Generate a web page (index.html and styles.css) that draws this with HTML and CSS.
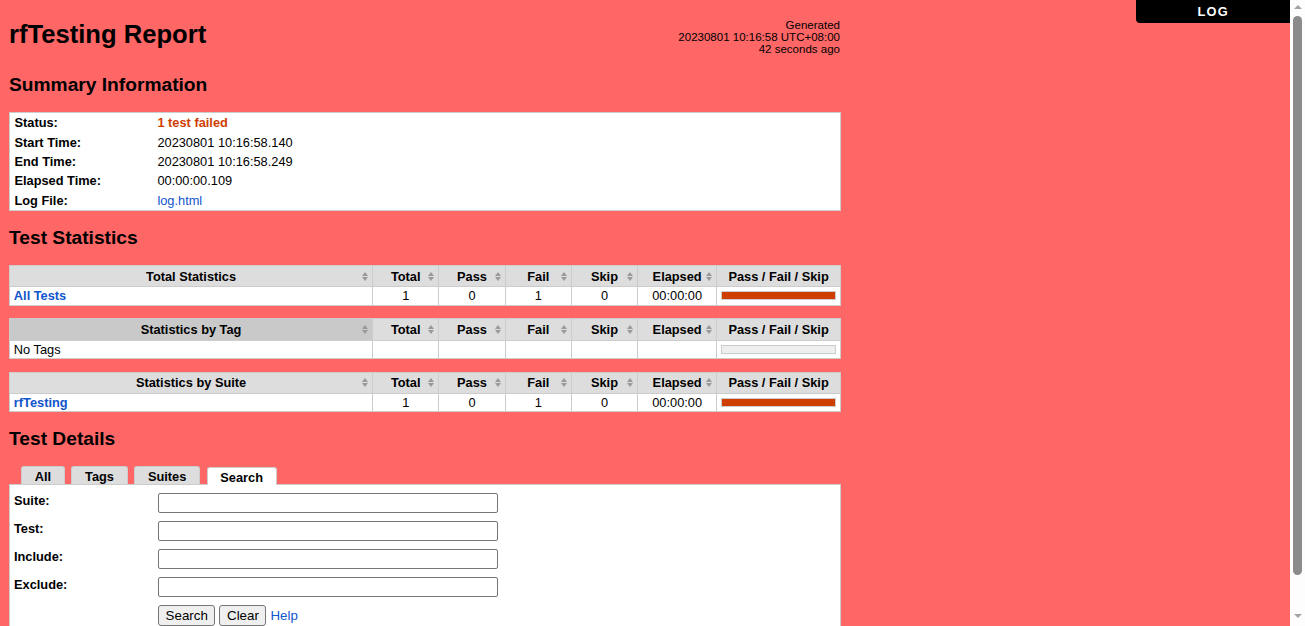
FILE: index.html
```html
<!DOCTYPE html>
<html lang="en">
<head>
<meta charset="utf-8">
<title>rfTesting Report</title>
<link rel="stylesheet" href="styles.css">
</head>
<body>
<div class="top-right">
  <a href="#" class="log-link">LOG</a>
</div>

<div class="fake-scrollbar" aria-hidden="true">
  <span class="sb-arrow sb-up"></span>
  <span class="sb-thumb"></span>
  <span class="sb-arrow sb-down"></span>
</div>

<div class="header">
  <h1>rfTesting Report</h1>
  <div class="generated">Generated<br>20230801 10:16:58 UTC+08:00<br>42 seconds ago</div>
</div>

<h2>Summary Information</h2>
<table class="details">
  <tr><th>Status:</th><td><span class="fail-text">1 test failed</span></td></tr>
  <tr><th>Start Time:</th><td>20230801 10:16:58.140</td></tr>
  <tr><th>End Time:</th><td>20230801 10:16:58.249</td></tr>
  <tr><th>Elapsed Time:</th><td>00:00:00.109</td></tr>
  <tr><th>Log File:</th><td><a href="#">log.html</a></td></tr>
</table>

<h2>Test Statistics</h2>
<table class="statistics">
  <thead>
    <tr>
      <th class="sortable">Total Statistics</th>
      <th class="col-stat sortable">Total</th>
      <th class="col-stat sortable">Pass</th>
      <th class="col-stat sortable">Fail</th>
      <th class="col-stat sortable">Skip</th>
      <th class="col-elapsed sortable">Elapsed</th>
      <th class="col-graph">Pass / Fail / Skip</th>
    </tr>
  </thead>
  <tbody>
    <tr>
      <td class="stat-name"><a href="#">All Tests</a></td>
      <td class="num">1</td>
      <td class="num">0</td>
      <td class="num">1</td>
      <td class="num">0</td>
      <td class="num">00:00:00</td>
      <td><div class="graph"><div class="fail-bar" style="width:100%"></div></div></td>
    </tr>
  </tbody>
</table>

<table class="statistics">
  <thead>
    <tr>
      <th class="sortable sorted">Statistics by Tag</th>
      <th class="col-stat sortable">Total</th>
      <th class="col-stat sortable">Pass</th>
      <th class="col-stat sortable">Fail</th>
      <th class="col-stat sortable">Skip</th>
      <th class="col-elapsed sortable">Elapsed</th>
      <th class="col-graph">Pass / Fail / Skip</th>
    </tr>
  </thead>
  <tbody>
    <tr>
      <td class="plain-name">No Tags</td>
      <td class="num"></td>
      <td class="num"></td>
      <td class="num"></td>
      <td class="num"></td>
      <td class="num"></td>
      <td><div class="graph empty"></div></td>
    </tr>
  </tbody>
</table>

<table class="statistics">
  <thead>
    <tr>
      <th class="sortable">Statistics by Suite</th>
      <th class="col-stat sortable">Total</th>
      <th class="col-stat sortable">Pass</th>
      <th class="col-stat sortable">Fail</th>
      <th class="col-stat sortable">Skip</th>
      <th class="col-elapsed sortable">Elapsed</th>
      <th class="col-graph">Pass / Fail / Skip</th>
    </tr>
  </thead>
  <tbody>
    <tr>
      <td class="stat-name"><a href="#">rfTesting</a></td>
      <td class="num">1</td>
      <td class="num">0</td>
      <td class="num">1</td>
      <td class="num">0</td>
      <td class="num">00:00:00</td>
      <td><div class="graph"><div class="fail-bar" style="width:100%"></div></div></td>
    </tr>
  </tbody>
</table>

<h2>Test Details</h2>
<div class="detail-tabs">
  <div class="tab">All</div>
  <div class="tab">Tags</div>
  <div class="tab">Suites</div>
  <div class="tab selected">Search</div>
</div>
<div class="detail-panel">
  <form class="search-form">
    <div class="search-row">
      <label class="search-label" for="s-suite">Suite:</label>
      <input class="search-input" id="s-suite" type="text">
    </div>
    <div class="search-row">
      <label class="search-label" for="s-test">Test:</label>
      <input class="search-input" id="s-test" type="text">
    </div>
    <div class="search-row">
      <label class="search-label" for="s-include">Include:</label>
      <input class="search-input" id="s-include" type="text">
    </div>
    <div class="search-row">
      <label class="search-label" for="s-exclude">Exclude:</label>
      <input class="search-input" id="s-exclude" type="text">
    </div>
    <div class="search-row">
      <span></span>
      <div class="search-buttons">
        <button type="button" class="btn">Search</button>
        <button type="button" class="btn">Clear</button>
        <a href="#">Help</a>
      </div>
    </div>
  </form>
</div>
</body>
</html>
```

FILE: styles.css
```css
html {
  background: #f66;
}

body {
  margin: 0;
  padding: 0 9px 29px;
  font-family: "Liberation Sans", Arial, Helvetica, sans-serif;
  font-size: 12.8px;
  color: #000;
  background: #f66;
}

a {
  color: #15c;
  text-decoration: none;
}

/* LOG link */
.top-right {
  position: fixed;
  top: 0;
  right: 15px;
  width: 153.6px;
  z-index: 10;
  text-align: center;
}

.log-link {
  display: block;
  background: #000;
  color: #fff;
  font-weight: bold;
  letter-spacing: 0.1em;
  padding: 0.3em 0;
  border-bottom-left-radius: 4px;
}

/* Browser scrollbar look-alike */
::-webkit-scrollbar {
  width: 0;
  display: none;
}

.fake-scrollbar {
  position: fixed;
  top: 0;
  right: 0;
  width: 15px;
  height: 100vh;
  background: #fdfdfd;
  display: flex;
  flex-direction: column;
  align-items: center;
  z-index: 20;
}

.sb-arrow {
  width: 0;
  height: 0;
  border-left: 4px solid transparent;
  border-right: 4px solid transparent;
}

.sb-up {
  margin-top: 5px;
  border-bottom: 4px solid #a3a3a3;
}

.sb-thumb {
  margin-top: 7px;
  width: 9px;
  height: 559px;
  border-radius: 5px;
  background: #8b8b8b;
}

.sb-down {
  margin-top: auto;
  margin-bottom: 8px;
  border-top: 4px solid #a3a3a3;
}

/* Header */
.header {
  width: 832px;
  height: 39.4px;
  margin: 19px 0 6px;
  display: flex;
  justify-content: space-between;
  align-items: flex-start;
}

h1 {
  margin: 1px 0 0;
  font-size: 25.6px;
  font-weight: bold;
}

.generated {
  font-size: 11.52px;
  line-height: 12px;
  text-align: right;
  white-space: nowrap;
  padding-right: 1px;
}

h2 {
  font-size: 19.2px;
  font-weight: bold;
  margin: 15.9px 0;
}

/* Summary */
.details {
  width: 832px;
  table-layout: fixed;
  border-collapse: collapse;
  border: 1px solid #ccc;
  background: #fff;
  margin-bottom: 12.8px;
}

.details th {
  width: 134px;
  text-align: left;
  white-space: nowrap;
  vertical-align: top;
  font-weight: bold;
  line-height: 14.3px;
  padding: 3px 0.35em 2.12px;
}

.details td {
  vertical-align: top;
  line-height: 14.3px;
  padding: 3px 0.35em 2.12px;
}

.fail-text {
  color: #ce3e01;
  font-weight: bold;
}

/* Statistics */
.statistics {
  width: 832px;
  table-layout: fixed;
  border-collapse: collapse;
  background: #fff;
  margin-bottom: 12.8px;
}

.statistics th,
.statistics td {
  border: 1px solid #ccc;
  padding: 0.1em 0.3em;
  vertical-align: middle;
}

.statistics th {
  background: #ddd;
  padding: 0.2em 0.3em;
  font-weight: bold;
  text-align: center;
  position: relative;
}

.statistics th.sorted {
  background: #c9c9c9;
}

.sortable::before,
.sortable::after {
  content: "";
  position: absolute;
  right: 4px;
  top: 50%;
  width: 0;
  height: 0;
  border-left: 3.5px solid transparent;
  border-right: 3.5px solid transparent;
}

.sortable::before {
  margin-top: -4.5px;
  border-bottom: 4px solid #999;
}

.sortable::after {
  margin-top: 0.5px;
  border-top: 4px solid #999;
}

.col-stat {
  width: 57.6px;
}

.col-elapsed {
  width: 70.4px;
}

.col-graph {
  width: 115.2px;
}

.statistics td.num {
  text-align: center;
}

.stat-name a {
  font-weight: bold;
}

.graph {
  display: flex;
  height: 7px;
  border: 1px solid #ccc;
  background: #f2f2f2;
}

.graph.empty {
  background: #eee;
}

.fail-bar {
  height: 100%;
  background: #ce3e01;
}

/* Details tabs */
.detail-tabs {
  display: flex;
  align-items: flex-end;
  gap: 6.6px;
  height: 19px;
  margin: 0 0 -1px 12px;
  position: relative;
  z-index: 1;
}

.tab {
  background: #ddd;
  border: 1px solid #ccc;
  border-bottom: 0;
  border-radius: 3px 3px 0 0;
  padding: 0 12.7px;
  height: 17px;
  line-height: 19px;
  font-weight: bold;
  margin-bottom: 1px;
}

.tab.selected {
  background: #fff;
  margin-bottom: 0;
}

.detail-panel {
  width: 832px;
  box-sizing: border-box;
  border: 1px solid #ccc;
  background: #fff;
  padding: 8px 4px;
}

.search-form {
  display: flex;
  flex-direction: column;
  gap: 8px;
  margin: 0;
}

.search-row {
  display: grid;
  grid-template-columns: 144px 340px;
  align-items: start;
}

.search-label {
  font-weight: bold;
}

.search-input {
  box-sizing: border-box;
  width: 340px;
  height: 20px;
  margin: 0;
  padding: 1px 2px;
  border: 1px solid #767676;
  border-radius: 2px;
  background: #fff;
  font-family: "Liberation Sans", Arial, sans-serif;
  font-size: 13.33px;
}

.search-buttons {
  display: flex;
  align-items: center;
  gap: 4px;
  white-space: nowrap;
}

.btn {
  height: 21px;
  margin: 0;
  padding: 1px 6.6px;
  border: 1px solid #767676;
  border-radius: 3px;
  background: #efefef;
  color: #000;
  font-family: "Liberation Sans", Arial, sans-serif;
  font-size: 13.33px;
}

.search-buttons a {
  font-size: 13.33px;
}
```
